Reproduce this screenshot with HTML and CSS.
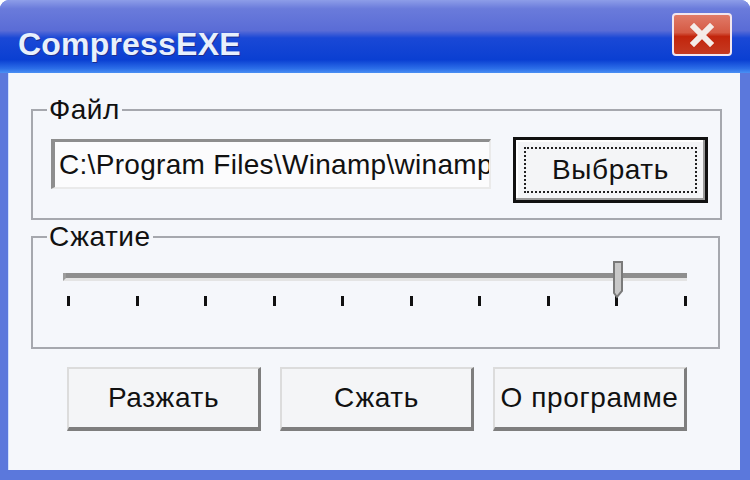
FILE: index.html
```html
<!DOCTYPE html>
<html lang="ru">
<head>
  <meta charset="UTF-8">
  <title>CompressEXE</title>
  <link rel="stylesheet" href="styles.css">
</head>
<body>
  <div class="window">
    <div class="titlebar">
      <span class="title">CompressEXE</span>
      <button class="close-btn" title="Закрыть">
        <svg width="26" height="24" viewBox="0 0 26 24">
          <path d="M5 4 L21 20 M21 4 L5 20" stroke="#f4ece8" stroke-width="6" stroke-linecap="square"/>
        </svg>
      </button>
    </div>

    <div class="client">
      <fieldset class="group">
        <legend>Файл</legend>
        <div class="file-row">
          <input class="edit" type="text" value="C:\Program Files\Winamp\winamp">
          <button class="btn btn-default"><span class="focus">Выбрать</span></button>
        </div>
      </fieldset>

      <fieldset class="group group-slider">
        <legend>Сжатие</legend>
        <div class="slider">
          <div class="track"></div>
          <svg class="thumb" width="12" height="38" viewBox="0 0 12 38">
            <path d="M2 1 H10 V30 L5 36 L2 32 Z" fill="#c8c8c8" stroke="#7a7a7a" stroke-width="2"/>
          </svg>
          <div class="ticks">
            <i></i><i></i><i></i><i></i><i></i><i></i><i></i><i></i><i></i><i></i>
          </div>
        </div>
      </fieldset>

      <div class="actions">
        <button class="btn">Разжать</button>
        <button class="btn">Сжать</button>
        <button class="btn">О программе</button>
      </div>
    </div>
  </div>
</body>
</html>
```

FILE: styles.css
```css
body { margin: 0; background: #fff; font-family: "Liberation Sans", Arial, sans-serif; }
.window { width: 750px; height: 480px; background: #5b78dc; border-radius: 9px 9px 0 0; display: flex; flex-direction: column; overflow: hidden; }
.titlebar { height: 73px; flex: none; display: flex; align-items: center; justify-content: space-between; padding: 0 18px 0 18px; box-sizing: border-box;
  background: linear-gradient(#8d9de8 0, #6a7bdb 12%, #5a6cd6 42%, #1a48d6 52%, #0a3fd2 82%, #2c6ee8 94%, #4a90f4 100%); }
.title { color: #e8f0fc; font-size: 32px; font-weight: bold; letter-spacing: 0.2px; margin-top: 16px; text-shadow: 1px 1px 0 #1a2f90; }
.close-btn { width: 60px; height: 43px; margin-top: -4px; padding: 0; border: 2px solid #f2e6ee; border-radius: 4px;
  background: linear-gradient(#e07a68 0, #d55a44 45%, #c2250c 55%, #c53a22 100%); display: flex; align-items: center; justify-content: center; }
.client { flex: 1; margin: 0 10px 10px 8px; background: #f5f7fb; border-left: 1px solid #cfe0ff; padding: 24px 20px 0 22px; box-sizing: border-box; }
.group { margin: 0 0 4px; padding: 14px 12px 15px 18px; border: 2px solid #a6a8ae; font-size: 28px; }
.group legend { padding: 0 2px; margin-left: -4px; line-height: 26px; color: #111; letter-spacing: 0.5px; }
.file-row { display: flex; align-items: flex-start; gap: 22px; }
.edit { width: 440px; height: 50px; margin-top: 2px; box-sizing: border-box; padding: 0 0 0 4px; font: 28px "Liberation Sans", Arial, sans-serif; letter-spacing: 0.3px; color: #111;
  background: #fcfcfd; border: 2px solid #eaeaea; border-top: 3px solid #8e8e8e; border-left: 4px solid #8e8e8e; }
.btn { width: 194px; height: 64px; font: 28px "Liberation Sans", Arial, sans-serif; letter-spacing: 0.6px; color: #111; background: #f4f5f7; padding: 0;
  border: 2px solid #dcdcdc; border-right: 3px solid #7e7e7e; border-bottom: 4px solid #7e7e7e; }
.btn-default { width: 195px; height: 66px; border: 3px solid #111; box-shadow: inset -2px -2px 0 #9a9a9a, inset 2px 2px 0 #fff; padding: 7px 8px; }
.focus { display: flex; height: 100%; align-items: center; justify-content: center; border: 2px dotted #222; box-sizing: border-box; }
.group-slider { padding-bottom: 15px; }
.slider { position: relative; width: 624px; margin: 0 0 26px 12px; padding-top: 9px; }
.track { height: 5px; background: #8e8e8e; border-bottom: 3px solid #e4e4e4; border-left: 3px solid #9c9c9c; }
.thumb { position: absolute; left: 549px; top: -3px; }
.ticks { display: flex; justify-content: space-between; margin: 15px 0 0 4px; }
.ticks i { width: 3px; height: 10px; background: #111; }
.actions { display: flex; justify-content: center; gap: 19px; margin-top: 18px; padding-left: 3px; }
```
